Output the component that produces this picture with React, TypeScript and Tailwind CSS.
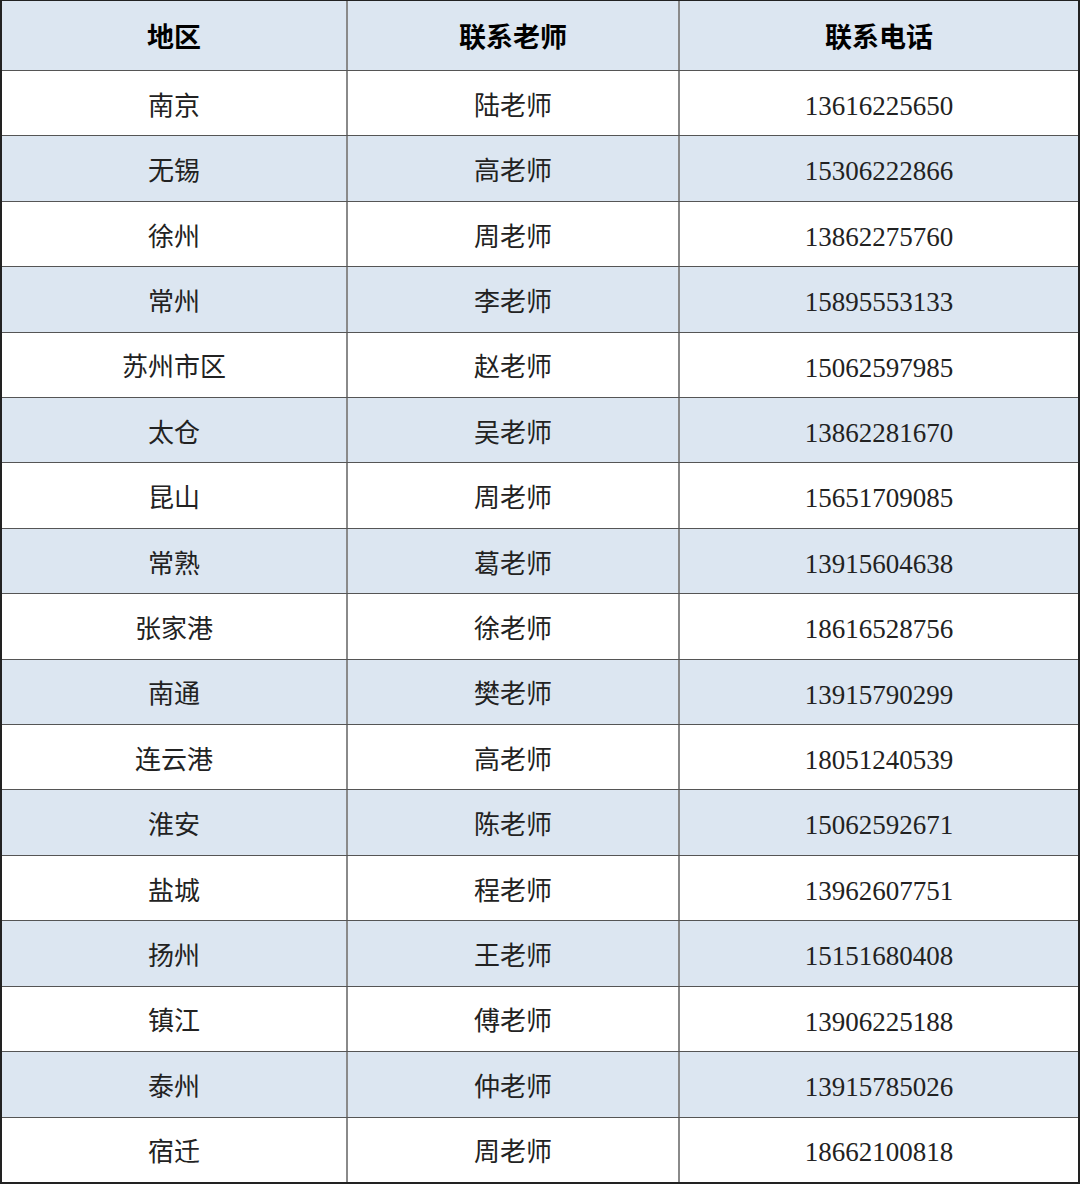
const rows: [string, string, string][] = [
  ["南京", "陆老师", "13616225650"],
  ["无锡", "高老师", "15306222866"],
  ["徐州", "周老师", "13862275760"],
  ["常州", "李老师", "15895553133"],
  ["苏州市区", "赵老师", "15062597985"],
  ["太仓", "吴老师", "13862281670"],
  ["昆山", "周老师", "15651709085"],
  ["常熟", "葛老师", "13915604638"],
  ["张家港", "徐老师", "18616528756"],
  ["南通", "樊老师", "13915790299"],
  ["连云港", "高老师", "18051240539"],
  ["淮安", "陈老师", "15062592671"],
  ["盐城", "程老师", "13962607751"],
  ["扬州", "王老师", "15151680408"],
  ["镇江", "傅老师", "13906225188"],
  ["泰州", "仲老师", "13915785026"],
  ["宿迁", "周老师", "18662100818"],
];

const font = { fontFamily: '"Liberation Serif", "Noto Sans CJK SC", serif' };

export default function App() {
  return (
    <div
      className="w-[1080px] h-[1184px] bg-white border-t border-l-2 border-r-2 border-b-2 border-[#222] flex flex-col"
      style={font}
    >
      {/* Header */}
      <div className="grid grid-cols-[346px_332px_1fr] h-[70px] shrink-0 bg-[#dce6f1] border-b-[1.5px] border-[#555] text-[27px] font-semibold text-black">
        <div className="flex items-center justify-center pt-[6px] border-r-2 border-[#8a8a8a]">地区</div>
        <div className="flex items-center justify-center pt-[6px] border-r-2 border-[#8a8a8a]">联系老师</div>
        <div className="flex items-center justify-center pt-[6px]">联系电话</div>
      </div>

      {/* Rows */}
      {rows.map(([area, teacher, phone], i) => (
        <div
          key={i}
          className={`grid grid-cols-[346px_332px_1fr] flex-1 text-[26px] text-[#222] ${
            i % 2 === 1 ? "bg-[#dce6f1]" : "bg-white"
          } ${i < rows.length - 1 ? "border-b-[1.5px] border-[#555]" : ""}`}
        >
          <div className="flex items-center justify-center pt-[6px] border-r-2 border-[#8a8a8a]">{area}</div>
          <div className="flex items-center justify-center pt-[6px] border-r-2 border-[#8a8a8a]">{teacher}</div>
          <div className="flex items-center justify-center pt-[6px] text-[27px]">{phone}</div>
        </div>
      ))}
    </div>
  );
}
